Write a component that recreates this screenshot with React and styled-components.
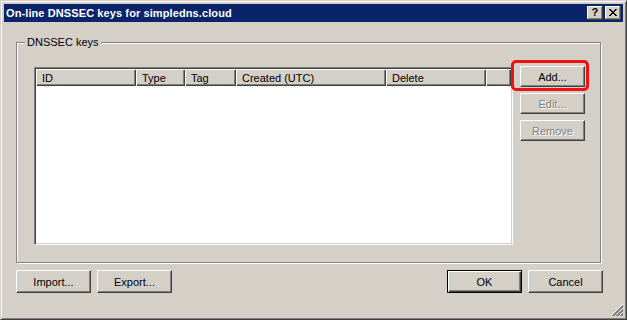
import React from 'react';
import styled, { createGlobalStyle } from 'styled-components';

const GlobalStyle = createGlobalStyle`
    body {
        margin: 0;
        background: #d4d0c8;
        font-family: "Liberation Sans", Arial, sans-serif;
        font-size: 11px;
        color: #000;
    }
`

const Window = styled.div`
    position: relative;
    width: 627px;
    height: 320px;
    box-sizing: border-box;
    background: #d4d0c8;
    border: 1px solid;
    border-color: #d4d0c8 #404040 #404040 #d4d0c8;
    box-shadow: inset 1px 1px #fff, inset -1px -1px #808080;
    padding: 3px;
    display: flex;
    flex-direction: column;
`

const TitleBar = styled.div`
    height: 18px;
    background: #0a246a;
    color: #fff;
    font-weight: bold;
    font-size: 11px;
    letter-spacing: 0.1px;
    display: flex;
    align-items: center;
    justify-content: space-between;
    padding: 0 2px;
`

const CaptionButtons = styled.div`
    display: flex;
    gap: 2px;
`

const CaptionButton = styled.div`
    width: 16px;
    height: 14px;
    box-sizing: border-box;
    background: #d4d0c8;
    color: #000;
    box-shadow: inset -1px -1px #404040, inset 1px 1px #fff, inset -2px -2px #808080;
    display: flex;
    align-items: center;
    justify-content: center;
    font-size: 11px;
    font-weight: bold;
    line-height: 1;
    padding-bottom: 1px;
`

const Body = styled.div`
    flex: 1;
    display: flex;
    flex-direction: column;
    padding: 0 20px 0 12px;
`

const GroupBox = styled.div`
    position: relative;
    margin: 20px 2px 0 0;
    height: 221px;
    box-sizing: border-box;
    border: 1px solid #808080;
    box-shadow: inset 1px 1px #fff, 1px 1px #fff;
    padding: 24px 15px 17px 17px;
    display: flex;
    gap: 7px;
`

const GroupLabel = styled.span`
    position: absolute;
    top: -7px;
    left: 8px;
    padding: 0 2px 0 2px;
    background: #d4d0c8;
    line-height: 13px;
`

const ListView = styled.div`
    flex: 1;
    background: #fff;
    border: 1px solid;
    border-color: #808080 #fff #fff #808080;
    box-shadow: inset 1px 1px #404040, inset -1px -1px #d4d0c8;
    padding: 1px;
    display: flex;
    flex-direction: column;
`

const Header = styled.div`
    display: flex;
    height: 17px;
`

const HeaderCell = styled.div`
    width: ${p => p.$w ? `${p.$w}px` : 'auto'};
    flex: ${p => p.$w ? 'none' : 1};
    box-sizing: border-box;
    background: #d4d0c8;
    box-shadow: inset 1px 1px #fff, inset -1px -1px #404040, inset -2px -2px #808080;
    padding-left: 6px;
    display: flex;
    align-items: center;
    white-space: nowrap;
    overflow: hidden;
`

const SideButtons = styled.div`
    width: 65px;
    margin-top: -1px;
    display: flex;
    flex-direction: column;
    gap: 6px;
`

const Button = styled.div`
    position: relative;
    width: ${p => p.$w || 65}px;
    height: ${p => p.$h || 21}px;
    box-sizing: border-box;
    background: #d4d0c8;
    border: 1px solid;
    border-color: ${p => p.$default ? '#000' : '#fff #404040 #404040 #fff'};
    box-shadow: ${p => p.$default
        ? 'inset 1px 1px #fff, inset -1px -1px #404040, inset -2px -2px #808080'
        : 'inset -1px -1px #808080'};
    color: ${p => p.$disabled ? '#808080' : '#000'};
    text-shadow: ${p => p.$disabled ? '1px 1px 0 #fff' : 'none'};
    display: flex;
    align-items: center;
    justify-content: center;
`

const Highlight = styled.div`
    position: absolute;
    top: -7px;
    left: -10px;
    right: -5px;
    bottom: -5px;
    border: 3px solid #ee1111;
    border-radius: 5px;
`

const BottomRow = styled.div`
    display: flex;
    gap: 6px;
    margin-top: 7px;
`

const Spacer = styled.div`
    flex: 1;
`

const Grip = styled.svg`
    position: absolute;
    right: 3px;
    bottom: 3px;
`

const columns = [
    { label: 'ID', w: 100 },
    { label: 'Type', w: 49 },
    { label: 'Tag', w: 51 },
    { label: 'Created (UTC)', w: 150 },
    { label: 'Delete', w: 100 },
    { label: '' },
]

const App = () => {
    return (
        <>
            <GlobalStyle />
            <Window>
                <TitleBar>
                    <span>On-line DNSSEC keys for simpledns.cloud</span>
                    <CaptionButtons>
                        <CaptionButton>?</CaptionButton>
                        <CaptionButton>
                            <svg width="8" height="7" viewBox="0 0 8 7" shapeRendering="crispEdges">
                                <path fill="#000" d="M0 0h2v1H0z M6 0h2v1H6z M1 1h2v1H1z M5 1h2v1H5z M2 2h4v1H2z M3 3h2v1H3z M2 4h4v1H2z M1 5h2v1H1z M5 5h2v1H5z M0 6h2v1H0z M6 6h2v1H6z" />
                            </svg>
                        </CaptionButton>
                    </CaptionButtons>
                </TitleBar>
                <Body>
                    <GroupBox>
                        <GroupLabel>DNSSEC keys</GroupLabel>
                        <ListView>
                            <Header>
                                {columns.map((c, i) => (
                                    <HeaderCell key={i} $w={c.w}>{c.label}</HeaderCell>
                                ))}
                            </Header>
                        </ListView>
                        <SideButtons>
                            <Button>
                                Add...
                                <Highlight />
                            </Button>
                            <Button $disabled>Edit...</Button>
                            <Button $disabled>Remove</Button>
                        </SideButtons>
                    </GroupBox>
                    <BottomRow>
                        <Button $w={75} $h={23}>Import...</Button>
                        <Button $w={75} $h={23}>Export...</Button>
                        <Spacer />
                        <Button $w={75} $h={23} $default>OK</Button>
                        <Button $w={75} $h={23}>Cancel</Button>
                    </BottomRow>
                </Body>
                <Grip width="12" height="12" viewBox="0 0 12 12" shapeRendering="crispEdges">
                    {[0, 4, 8].map(k => (
                        <g key={k}>
                            <line x1={k + 0.5} y1="12" x2="12" y2={k + 0.5} stroke="#fff" />
                            <line x1={k + 1.5} y1="12" x2="12" y2={k + 1.5} stroke="#808080" />
                            <line x1={k + 2.5} y1="12" x2="12" y2={k + 2.5} stroke="#808080" />
                        </g>
                    ))}
                </Grip>
            </Window>
        </>
    );
};

export default App;
